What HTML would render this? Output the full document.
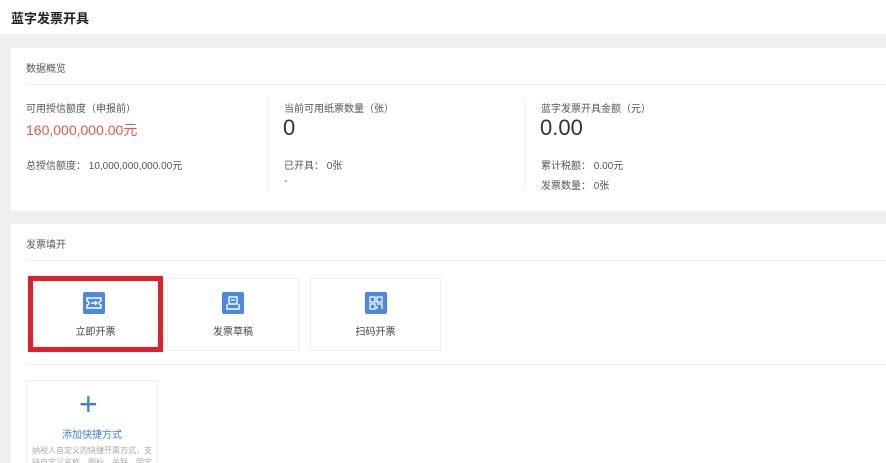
<!DOCTYPE html>
<html><head><meta charset="utf-8"><style>
html,body{margin:0;width:886px;height:463px;overflow:hidden}
body{background:#efefef;position:relative;font-family:"Liberation Sans","Noto Sans CJK SC",sans-serif;color:#555;font-size:10px}
.a{position:absolute;white-space:nowrap}
.card{position:absolute;background:#fff}
.hl{position:absolute;height:1px;background:#eee}
.vl{position:absolute;width:1px;background:#eee}
.tile{position:absolute;background:#fff;border:1px solid #eee;box-sizing:border-box;overflow:hidden}
.ic{position:absolute;width:22px;height:22px;background:#4a88e4;border-radius:2px}
.lab{position:absolute;width:100%;text-align:center;font-size:10px;color:#444}
</style></head><body>
<div class="card" style="left:0;top:0;width:886px;height:34px"></div>
<div class="a" style="left:11px;top:8px;font-size:13px;font-weight:bold;color:#222">蓝字发票开具</div>

<div class="card" style="left:11px;top:48px;width:875px;height:163px"></div>
<div class="a" style="left:26px;top:60px">数据概览</div>
<div class="hl" style="left:26px;top:84px;width:860px"></div>
<div class="a" style="left:26px;top:100px">可用授信额度（申报前）</div>
<div class="a" style="left:26px;top:120px;font-size:14px;color:#e0574e">160,000,000.00元</div>
<div class="a" style="left:26px;top:157px">总授信额度： 10,000,000,000.00元</div>
<div class="vl" style="left:268px;top:98px;height:92px"></div>
<div class="a" style="left:284px;top:100px">当前可用纸票数量（张）</div>
<div class="a" style="left:283px;top:115px;font-size:22px;color:#333">0</div>
<div class="a" style="left:284px;top:157px">已开具： 0张</div>
<div class="a" style="left:284px;top:176px">-</div>
<div class="vl" style="left:525px;top:98px;height:92px"></div>
<div class="a" style="left:541px;top:100px">蓝字发票开具金额（元）</div>
<div class="a" style="left:540px;top:115px;font-size:22px;color:#333">0.00</div>
<div class="a" style="left:541px;top:157px">累计税额： 0.00元</div>
<div class="a" style="left:541px;top:177px">发票数量： 0张</div>

<div class="card" style="left:11px;top:224px;width:875px;height:239px"></div>
<div class="a" style="left:26px;top:236px">发票填开</div>
<div class="hl" style="left:26px;top:260px;width:860px"></div>

<div class="tile" style="left:167px;top:278px;width:132px;height:73px">
 <div class="ic" style="left:54px;top:13px"><svg width="22" height="22" fill="none" stroke="#fff" stroke-width="1.4"><path d="M7 5h8v7H7z"/><path d="M9 8h4"/><path d="M5 12v5h12v-5"/></svg></div>
 <div class="lab" style="top:44px">发票草稿</div></div>
<div class="tile" style="left:310px;top:278px;width:131px;height:73px">
 <div class="ic" style="left:54px;top:13px"><svg width="22" height="22" fill="none" stroke="#fff" stroke-width="1.3"><rect x="5" y="5" width="5" height="5"/><rect x="12" y="5" width="5" height="5"/><rect x="5" y="12" width="5" height="5"/><path d="M12 12h5v5M12 14v3"/></svg></div>
 <div class="lab" style="top:44px">扫码开票</div></div>
<div class="tile" style="left:28px;top:276px;width:135px;height:76px;border:5px solid #e3202a">
 <div class="ic" style="left:50px;top:11px"><svg width="22" height="22" fill="none" stroke="#fff" stroke-width="1.4"><path d="M4 6h14v3a2 2 0 0 0 0 4v3H4v-3a2 2 0 0 0 0-4z"/><path d="M8 11h6M12 9l2 2-2 2"/></svg></div>
 <div class="lab" style="top:42px">立即开票</div></div>

<div class="hl" style="left:26px;top:364px;width:860px"></div>
<div class="tile" style="left:26px;top:380px;width:132px;height:83px;border-bottom:none">
 <div class="a" style="left:52px;top:8px;font-size:32px;color:#3d7fe0;line-height:30px;font-weight:300">+</div>
 <div class="lab" style="top:45px;color:#3d7fe0">添加快捷方式</div>
 <div class="lab" style="top:64px;color:#aaa;font-size:8px">纳税人自定义的快捷开票方式，支</div>
 <div class="lab" style="top:76px;color:#aaa;font-size:8px">持自定义名称、图标、关联、固定</div>
</div>
</body></html>
